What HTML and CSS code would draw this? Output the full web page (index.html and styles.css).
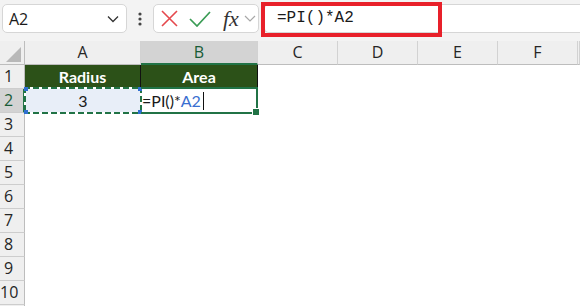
FILE: index.html
```html
<!DOCTYPE html>
<html lang="en">
<head>
    <meta charset="UTF-8">
    <meta name="viewport" content="width=device-width, initial-scale=1.0">
    <title>PI formula</title>
    <link rel="stylesheet" href="styles.css">
</head>
<body>
    <div class="toolbar">
        <div class="namebox">
            <span>A2</span>
            <svg width="12" height="8" viewBox="0 0 12 8"><polyline points="1,1.5 6,6.5 11,1.5" fill="none" stroke="#333" stroke-width="1.3"/></svg>
        </div>
        <div class="dots">
            <svg width="4" height="14" viewBox="0 0 4 14"><circle cx="2" cy="2" r="1.6" fill="#444"/><circle cx="2" cy="7" r="1.6" fill="#444"/><circle cx="2" cy="12" r="1.6" fill="#444"/></svg>
        </div>
        <div class="fnbox">
            <svg class="cancel" width="17" height="17" viewBox="0 0 17 17"><path d="M1 1L16 16M16 1L1 16" stroke="#e5484d" stroke-width="1.6" fill="none"/></svg>
            <svg class="enter" width="22" height="16" viewBox="0 0 22 16"><polyline points="1,8 8,15 21,1" fill="none" stroke="#3a9c55" stroke-width="1.7"/></svg>
            <span class="fx">fx</span>
            <svg class="more" width="12" height="7" viewBox="0 0 12 7"><polyline points="1,1 6,6 11,1" fill="none" stroke="#a8a8a8" stroke-width="1.2"/></svg>
        </div>
        <div class="formula">=PI()*A2</div>
    </div>
    <div class="callout"></div>

    <div class="sheet">
        <div class="row head">
            <div class="corner"><i></i></div>
            <div class="ch col-a">A</div>
            <div class="ch col-b selected">B</div>
            <div class="ch col-n">C</div>
            <div class="ch col-n">D</div>
            <div class="ch col-n">E</div>
            <div class="ch col-n">F</div>
            <div class="ch rest"></div>
        </div>
        <div class="row">
            <div class="rh">1</div>
            <div class="cell col-a title">Radius</div>
            <div class="cell col-b title">Area</div>
        </div>
        <div class="row">
            <div class="rh selected">2</div>
            <div class="cell col-a copied">3</div>
            <div class="cell col-b editing">=PI()*<span class="ref">A2</span><span class="caret"></span></div>
        </div>
        <div class="row"><div class="rh">3</div></div>
        <div class="row"><div class="rh">4</div></div>
        <div class="row"><div class="rh">5</div></div>
        <div class="row"><div class="rh">6</div></div>
        <div class="row"><div class="rh">7</div></div>
        <div class="row"><div class="rh">8</div></div>
        <div class="row"><div class="rh">9</div></div>
        <div class="row"><div class="rh">10</div></div>
        <div class="row"><div class="rh"></div></div>
    </div>
</body>
</html>
```

FILE: styles.css
```css
* {
    margin: 0;
    padding: 0;
    box-sizing: border-box;
}
body {
    width: 580px;
    height: 306px;
    overflow: hidden;
    background: #fff;
    font-family: "Open Sans", "Noto Sans", sans-serif;
    color: #222;
    position: relative;
}
.toolbar {
    height: 41px;
    background: #f3f3f3;
    display: flex;
    align-items: flex-start;
    padding: 4px 0 0 2px;
}
.namebox {
    width: 125px;
    height: 29px;
    background: #fff;
    border: 1px solid #d6d6d6;
    border-radius: 5px;
    display: flex;
    align-items: center;
    justify-content: space-between;
    padding: 0 7px 0 6px;
    font-size: 16px;
    color: #1a1a1a;
}
.dots {
    width: 26px;
    height: 29px;
    display: flex;
    align-items: center;
    justify-content: center;
}
.fnbox {
    width: 106px;
    height: 29px;
    background: #fff;
    border: 1px solid #d6d6d6;
    border-radius: 5px;
    display: flex;
    align-items: center;
    padding-left: 7px;
}
.fnbox .enter {
    margin-left: 11px;
}
.fnbox .fx {
    margin-left: 12px;
    font-family: "Liberation Serif", serif;
    font-style: italic;
    font-size: 22px;
    color: #333;
    line-height: 1;
}
.fnbox .more {
    margin-left: 5px;
}
.formula {
    flex: 1;
    height: 29px;
    margin-left: 5px;
    background: #fff;
    border: 1px solid #d6d6d6;
    border-right: 0;
    border-radius: 5px 0 0 5px;
    padding-left: 12px;
    font-family: "Liberation Mono", "DejaVu Sans Mono", monospace;
    font-size: 16px;
    line-height: 27px;
    color: #1a1a1a;
}
.callout {
    position: absolute;
    left: 261px;
    top: 2px;
    width: 181px;
    height: 35px;
    border: 4px solid #e8202a;
}

.sheet {
    font-family: "Lato", "Open Sans", sans-serif;
    font-size: 16px;
}
.row {
    display: flex;
    height: 24px;
}
.col-a { width: 116px; }
.col-b { width: 117px; }
.col-n { width: 80px; }
.rest { flex: 1; }

.head .corner,
.ch {
    background: #efefef;
    border-right: 1px solid #d2d2d2;
    border-bottom: 1px solid #bdbdbd;
}
.corner {
    width: 25px;
    display: flex;
    align-items: flex-end;
    justify-content: flex-end;
    padding: 0 3px 2px 0;
    border-right-color: #bdbdbd !important;
}
.corner i {
    width: 0;
    height: 0;
    border-left: 15px solid transparent;
    border-bottom: 15px solid #b8b8b8;
}
.ch {
    text-align: center;
    line-height: 23px;
    font-family: "Open Sans", sans-serif;
    font-size: 16px;
    color: #262626;
}
.ch.selected {
    background: #d3d3d3;
    border-bottom: 2px solid #217346;
    color: #185c37;
}
.rh {
    width: 25px;
    background: #efefef;
    border-right: 1px solid #bdbdbd;
    border-bottom: 1px solid #cdcdcd;
    padding-right: 7px;
    text-align: center;
    line-height: 23px;
    font-family: "Open Sans", sans-serif;
    font-size: 16px;
    color: #262626;
    white-space: nowrap;
}
.rh.selected {
    background: #d3d3d3;
    border-right: 2px solid #217346;
    padding-right: 6px;
    color: #185c37;
}
.cell {
    line-height: 24px;
    white-space: nowrap;
    position: relative;
}
.title {
    background: #2c5118;
    color: #fff;
    font-weight: bold;
    text-align: center;
    border-right: 1px solid #111;
}
.copied {
    background: #e8eef8;
    text-align: center;
    color: #1a1a1a;
}
.copied::before {
    content: "";
    position: absolute;
    left: -1px;
    right: -1px;
    top: -2px;
    bottom: -1px;
    background:
        repeating-linear-gradient(90deg, #217346 0 6px, #fff 6px 9px) top left / 100% 2px no-repeat,
        repeating-linear-gradient(90deg, #217346 0 6px, #fff 6px 9px) bottom left / 100% 2px no-repeat,
        repeating-linear-gradient(180deg, #217346 0 6px, #fff 6px 9px) top left / 2px 100% no-repeat,
        repeating-linear-gradient(180deg, #217346 0 6px, #fff 6px 9px) top right / 2px 100% no-repeat;
}
.copied::after {
    content: "";
    position: absolute;
    left: -1px;
    top: -2px;
    width: 4px;
    height: 4px;
    background: #2f6fd0;
    box-shadow: 114px 0 #2f6fd0, 0 23px #2f6fd0, 114px 23px #2f6fd0;
}
.editing {
    padding-left: 1px;
    color: #1a1a1a;
    display: flex;
    align-items: center;
}
.editing .ref {
    color: #3a6fd0;
}
.editing .caret {
    width: 1px;
    height: 18px;
    background: #111;
    margin-left: 2px;
}
.editing::before {
    content: "";
    position: absolute;
    left: 0;
    right: 0;
    top: -2px;
    bottom: -1px;
    border: 2px solid #217346;
    border-left: 0;
}
.editing::after {
    content: "";
    position: absolute;
    right: -2px;
    bottom: -3px;
    width: 6px;
    height: 6px;
    background: #217346;
    border: 1px solid #fff;
}
```
